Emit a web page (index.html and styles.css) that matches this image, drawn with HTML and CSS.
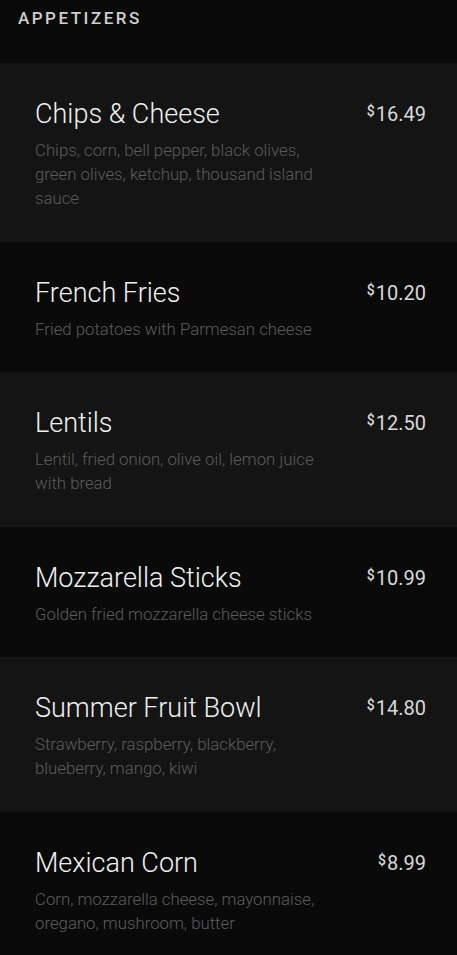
FILE: index.html
```html
<!doctype html>
<html lang="en">
  <head>
    <meta charset="UTF-8" />
    <meta name="viewport" content="width=device-width, initial-scale=1.0" />
    <title>Menu - Appetizers</title>
    <link rel="stylesheet" href="styles.css">
  </head>
  <body>
    <section class="menu-section">
      <h2 class="section-title">Appetizers</h2>

      <ul class="menu-list">
        <li class="menu-item">
          <div class="item-text">
            <h3 class="item-name">Chips &amp; Cheese</h3>
            <p class="item-desc">Chips, corn, bell pepper, black olives, green olives, ketchup, thousand island sauce</p>
          </div>
          <div class="item-price"><span class="currency">$</span>16.49</div>
        </li>
        <li class="menu-item">
          <div class="item-text">
            <h3 class="item-name">French Fries</h3>
            <p class="item-desc">Fried potatoes with Parmesan cheese</p>
          </div>
          <div class="item-price"><span class="currency">$</span>10.20</div>
        </li>
        <li class="menu-item">
          <div class="item-text">
            <h3 class="item-name">Lentils</h3>
            <p class="item-desc">Lentil, fried onion, olive oil, lemon juice with bread</p>
          </div>
          <div class="item-price"><span class="currency">$</span>12.50</div>
        </li>
        <li class="menu-item">
          <div class="item-text">
            <h3 class="item-name">Mozzarella Sticks</h3>
            <p class="item-desc">Golden fried mozzarella cheese sticks</p>
          </div>
          <div class="item-price"><span class="currency">$</span>10.99</div>
        </li>
        <li class="menu-item">
          <div class="item-text">
            <h3 class="item-name">Summer Fruit Bowl</h3>
            <p class="item-desc">Strawberry, raspberry, blackberry, blueberry, mango, kiwi</p>
          </div>
          <div class="item-price"><span class="currency">$</span>14.80</div>
        </li>
        <li class="menu-item">
          <div class="item-text">
            <h3 class="item-name">Mexican Corn</h3>
            <p class="item-desc">Corn, mozzarella cheese, mayonnaise, oregano, mushroom, butter</p>
          </div>
          <div class="item-price"><span class="currency">$</span>8.99</div>
        </li>
      </ul>
    </section>
  </body>
</html>
```

FILE: styles.css
```css
* {
  margin: 0;
  padding: 0;
  box-sizing: border-box;
}

body {
  font-family: Roboto, 'Noto Sans', sans-serif;
  background-color: #0a0a0a;
  color: #e8e8e8;
}

.section-title {
  height: 63px;
  padding: 8px 18px 0;
  font-size: 17px;
  font-weight: 500;
  line-height: 20px;
  letter-spacing: 2.5px;
  text-transform: uppercase;
  color: #cfcfcf;
}

.menu-list {
  list-style: none;
}

.menu-item {
  display: flex;
  justify-content: space-between;
  align-items: flex-start;
  padding: 34px 31px 31.5px 35px;
  background: #0a0a0a;
}

.menu-item:nth-child(odd) {
  background: #141414;
}

.item-text {
  flex: 1;
}

.item-name {
  font-size: 27px;
  font-weight: 300;
  line-height: 34px;
  color: #f0f0f0;
}

.item-desc {
  max-width: 295px;
  margin-top: 7px;
  font-size: 16.8px;
  font-weight: 300;
  line-height: 24px;
  color: #5c5c5c;
}

.item-price {
  padding-top: 2px;
  font-size: 20px;
  font-weight: 400;
  line-height: 24px;
  color: #d8d8d8;
}

.currency {
  font-size: 14px;
  font-weight: 500;
  vertical-align: 5px;
  margin-right: 1px;
}
```
